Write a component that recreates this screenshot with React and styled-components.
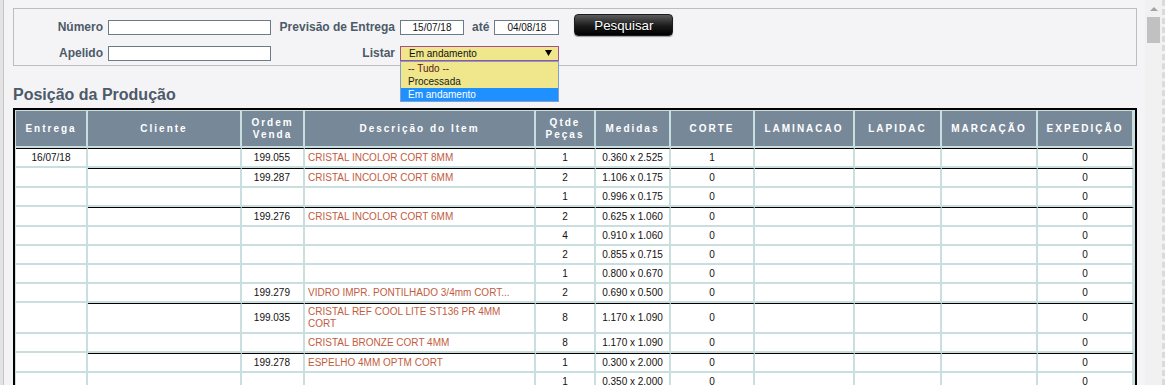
import React from 'react';
import styled, { createGlobalStyle } from 'styled-components';

const GlobalStyle = createGlobalStyle`
    body {
        margin: 0;
        background: #f4f4f6;
        font-family: 'Liberation Sans', Arial, sans-serif;
    }
    input, button {
        font-family: inherit;
    }
`;

const Frame = styled.div`
    display: flex;
    height: 385px;
    overflow: hidden;
`;

const EdgeBar = styled.div`
    width: 4px;
    box-sizing: border-box;
    border-left: 3px solid #e3e3e3;
    border-right: 1px solid #c6c6c6;
`;

const Main = styled.main`
    flex: 1;
    min-width: 0;
    padding: 8px 8px 0 9px;
`;

const FilterPanel = styled.form`
    display: grid;
    grid-template-columns: 94px 163px 129px 1fr;
    grid-template-rows: 16px 16px;
    row-gap: 10px;
    align-items: center;
    padding: 10px 0 4px;
    border: 1px solid #bdbdbd;
`;

const Label = styled.label`
    padding-right: 5px;
    text-align: right;
    font-size: 12px;
    font-weight: bold;
    color: #4d5a68;
`;

const TextInput = styled.input`
    box-sizing: border-box;
    width: ${props => props.$width || 163}px;
    height: 15px;
    padding: 0;
    border: 1px solid #6c7b8a;
    background: #fff;
    font-size: 10px;
    color: #111;
    text-align: ${props => props.$center ? 'center' : 'left'};
    outline: none;
`;

const DateGroup = styled.div`
    display: flex;
    align-items: center;
`;

const Until = styled.span`
    margin: 0 5px 0 8px;
    font-size: 12px;
    font-weight: bold;
    color: #4d5a68;
`;

const SearchButton = styled.button`
    width: 99px;
    height: 22px;
    margin: 0 0 4px 15px;
    padding: 0;
    border: 1px solid #1c1c1c;
    border-radius: 4px;
    background: linear-gradient(#5c5c5c, #1a1a1a 55%, #000);
    box-shadow: 0 1px 1px rgba(0, 0, 0, .35);
    color: #fff;
    font-size: 13.3px;
    text-shadow: 0 1px 0 #000;
`;

const SelectWrap = styled.div`
    position: relative;
    width: 159px;
`;

const SelectBox = styled.div`
    box-sizing: border-box;
    display: flex;
    align-items: center;
    justify-content: space-between;
    height: 15px;
    padding: 0 6px 0 8px;
    border: 1px solid #a2508e;
    background: #f0e68c;
    font-size: 10px;
    color: #111;
`;

const DropList = styled.ul`
    position: absolute;
    top: 100%;
    left: 0;
    z-index: 2;
    box-sizing: border-box;
    width: 159px;
    margin: 0;
    padding: 0;
    list-style: none;
    border: 1px solid #7f9fd0;
    background: #f0e68c;
`;

const DropItem = styled.li`
    height: 13px;
    padding-left: 7px;
    line-height: 13px;
    font-size: 10px;
    color: ${props => props.$selected ? '#fff' : props.$color || '#1a1a1a'};
    background: ${props => props.$selected ? '#1e90ff' : 'transparent'};
`;

const Title = styled.h2`
    margin: 19px 0 3px;
    font-size: 16px;
    line-height: 20px;
    font-weight: bold;
    color: #4d5a68;
`;

const ProductionTable = styled.table`
    box-sizing: border-box;
    width: 1124px;
    table-layout: fixed;
    border-collapse: separate;
    border-spacing: 0;
    border: 2px solid #000;
    padding: 1px;
    background: #c9dfdf;
`;

const HeadCell = styled.th`
    height: 37px;
    padding: 0 2px;
    box-sizing: border-box;
    border-right: 2px solid #c9dfdf;
    border-bottom: 2px solid #c9dfdf;
    background: #778899;
    color: #fff;
    font-size: 10px;
    line-height: 12px;
    font-weight: bold;
    letter-spacing: 2px;
    text-align: center;
`;

const Row = styled.tr`
    height: ${props => props.$group ? 20 : 19}px;
`;

const Cell = styled.td`
    padding: ${props => props.$align === 'left' ? '2px 5px 2px 3px' : props.$align === 'right' ? '0 13px 0 0' : '0'};
    border-top: ${props => props.$line ? '1px solid #000' : 'none'};
    border-right: 2px solid #c9dfdf;
    border-bottom: 2px solid #c9dfdf;
    background: #fff;
    font-size: 10px;
    line-height: 12px;
    color: ${props => props.$red ? '#c25c3e' : '#111'};
    text-align: ${props => props.$align || 'center'};
    vertical-align: middle;
`;

const ScrollTrack = styled.div`
    display: flex;
    flex-direction: column;
    align-items: center;
    width: 17px;
    padding-top: 7px;
    border-right: 3px dashed #dadada;
    background: #f1f1f1;
`;

const ScrollArrow = styled.div`
    width: 0;
    height: 0;
    border-left: 4px solid transparent;
    border-right: 4px solid transparent;
    border-bottom: 4px solid #a3a3a3;
`;

const ScrollThumb = styled.div`
    width: 13px;
    height: 26px;
    margin-top: 6px;
    background: #c1c1c1;
`;

const columns = [
    ['Entrega', 72],
    ['Cliente', 154],
    ['Ordem Venda', 63],
    ['Descrição do Item', 231],
    ['Qtde Peças', 60],
    ['Medidas', 75],
    ['CORTE', 84],
    ['LAMINACAO', 100],
    ['LAPIDAC', 87],
    ['MARCAÇÃO', 96],
    ['EXPEDIÇÃO', 96],
];

const rows = [
    { date: '16/07/18', group: true, order: '199.055', desc: 'CRISTAL INCOLOR CORT 8MM', qty: 1, size: '0.360 x 2.525', corte: 1 },
    { group: true, order: '199.287', desc: 'CRISTAL INCOLOR CORT 6MM', qty: 2, size: '1.106 x 0.175' },
    { qty: 1, size: '0.996 x 0.175' },
    { group: true, order: '199.276', desc: 'CRISTAL INCOLOR CORT 6MM', qty: 2, size: '0.625 x 1.060' },
    { qty: 4, size: '0.910 x 1.060' },
    { qty: 2, size: '0.855 x 0.715' },
    { qty: 1, size: '0.800 x 0.670' },
    { order: '199.279', desc: 'VIDRO IMPR. PONTILHADO 3/4mm CORT...', qty: 2, size: '0.690 x 0.500' },
    { group: true, order: '199.035', desc: 'CRISTAL REF COOL LITE ST136 PR 4MM CORT', qty: 8, size: '1.170 x 1.090' },
    { desc: 'CRISTAL BRONZE CORT 4MM', qty: 8, size: '1.170 x 1.090' },
    { group: true, order: '199.278', desc: 'ESPELHO 4MM OPTM CORT', qty: 1, size: '0.300 x 2.000' },
    { qty: 1, size: '0.350 x 2.000' },
    { qty: 1, size: '0.350 x 2.000' },
];

const App = () => (
    <Frame>
        <GlobalStyle />
        <EdgeBar />
        <Main>
            <FilterPanel onSubmit={e => e.preventDefault()}>
                <Label>Número</Label>
                <TextInput readOnly />
                <Label>Previsão de Entrega</Label>
                <DateGroup>
                    <TextInput readOnly $width={64} $center value="15/07/18" />
                    <Until>até</Until>
                    <TextInput readOnly $width={65} $center value="04/08/18" />
                    <SearchButton type="button">Pesquisar</SearchButton>
                </DateGroup>

                <Label>Apelido</Label>
                <TextInput readOnly />
                <Label>Listar</Label>
                <SelectWrap>
                    <SelectBox>
                        Em andamento
                        <svg width="7" height="6" viewBox="0 0 7 6"><path d="M0 0H7L3.5 6Z" fill="#000" /></svg>
                    </SelectBox>
                    <DropList>
                        <DropItem $color="#5c2020">-- Tudo --</DropItem>
                        <DropItem>Processada</DropItem>
                        <DropItem $selected>Em andamento</DropItem>
                    </DropList>
                </SelectWrap>
            </FilterPanel>

            <Title>Posição da Produção</Title>

            <ProductionTable>
                <colgroup>
                    {columns.map(([name, w]) => <col key={name} style={{ width: w }} />)}
                </colgroup>
                <thead>
                    <tr>
                        {columns.map(([name]) => <HeadCell key={name}>{name}</HeadCell>)}
                    </tr>
                </thead>
                <tbody>
                    {rows.map((r, i) => (
                        <Row key={i} $group={r.group}>
                            <Cell $line={r.group && r.date}>{r.date}</Cell>
                            <Cell $line={r.group} />
                            <Cell $line={r.group} $align="right">{r.order}</Cell>
                            <Cell $line={r.group} $align="left" $red>{r.desc}</Cell>
                            <Cell $line={r.group}>{r.qty}</Cell>
                            <Cell $line={r.group}>{r.size}</Cell>
                            <Cell $line={r.group}>{r.corte || 0}</Cell>
                            <Cell $line={r.group} />
                            <Cell $line={r.group} />
                            <Cell $line={r.group} />
                            <Cell $line={r.group}>0</Cell>
                        </Row>
                    ))}
                </tbody>
            </ProductionTable>
        </Main>
        <ScrollTrack>
            <ScrollArrow />
            <ScrollThumb />
        </ScrollTrack>
    </Frame>
);

export default App;
